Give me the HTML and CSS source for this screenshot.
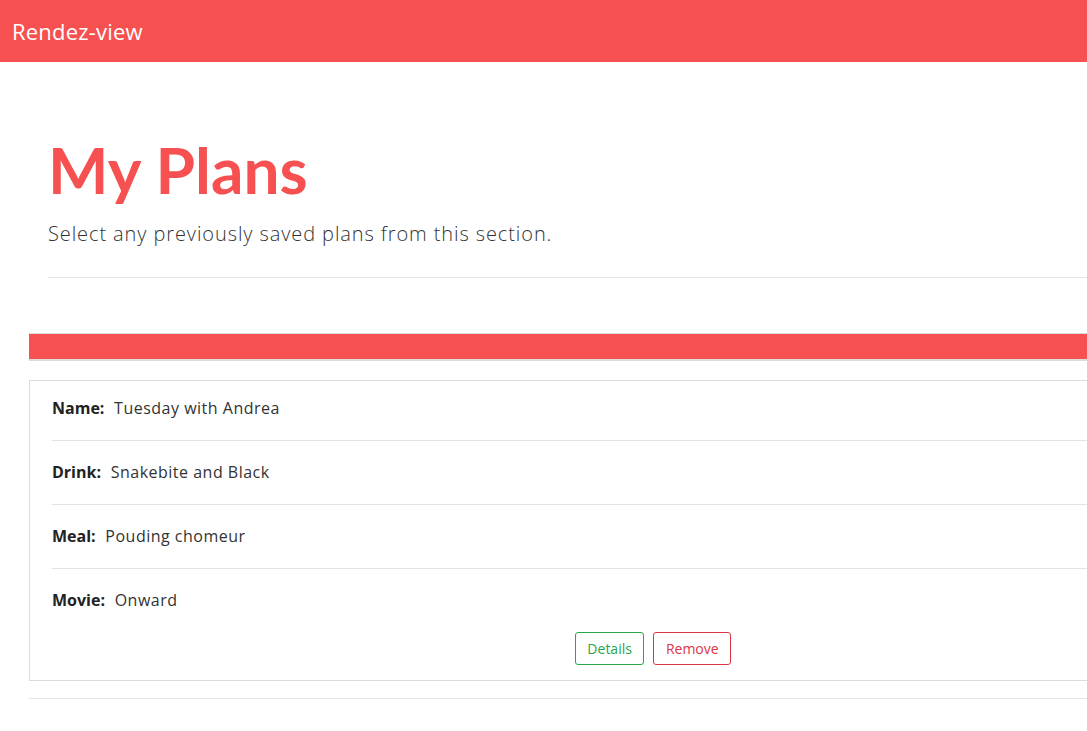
FILE: index.html
```html
<!DOCTYPE html>
<html lang="en">
<head>
<meta charset="utf-8">
<title>Rendez-view</title>
<link rel="stylesheet" href="styles.css">
</head>
<body>
<nav class="navbar"><span class="brand">Rendez-view</span></nav>
<main class="page">
  <section class="jumbo">
    <h1 class="title">My Plans</h1>
    <p class="lead">Select any previously saved plans from this section.</p>
    <hr class="rule">
  </section>
  <div class="bar"></div>
  <div class="card">
    <ul class="fields">
      <li class="field"><b>Name:</b> Tuesday with Andrea</li>
      <li class="field"><b>Drink:</b> Snakebite and Black</li>
      <li class="field"><b>Meal:</b> Pouding chomeur</li>
      <li class="field"><b>Movie:</b> Onward</li>
    </ul>
    <div class="actions">
      <button class="btn btn-details">Details</button>
      <button class="btn btn-remove">Remove</button>
    </div>
  </div>
  <hr class="rule bottom">
</main>
</body>
</html>
```
FILE: styles.css
```css
html, body { overflow: hidden; }
body {
  margin: 0;
  font-family: "Open Sans", "Lato", sans-serif;
  color: #212529;
  background: #fff;
}
.navbar {
  height: 62px;
  background: #f65050;
  display: flex;
  align-items: center;
  padding: 0 12px;
}
.brand {
  color: #fff;
  font-size: 22px;
  letter-spacing: 0.2px;
  line-height: 1;
}
.page {
  width: 1226px;
  margin-left: 29px;
}
.jumbo {
  padding: 70px 19px 0;
}
.title {
  margin: 0;
  color: #f65050;
  font-family: "Lato", "Open Sans", sans-serif;
  font-size: 64px;
  font-weight: 700;
  line-height: 1.2;
}
.lead {
  margin: 10px 0 0;
  font-size: 20px;
  font-weight: 300;
  letter-spacing: 0.9px;
  line-height: 30px;
  color: #333;
}
.rule {
  border: 0;
  border-top: 1px solid #e3e3e3;
  margin: 28px 0 0;
}
.bar {
  margin-top: 55px;
  height: 25px;
  background: #f65050;
  border-top: 1px solid #dcdcdc;
  border-bottom: 2px solid #dcdcdc;
}
.card {
  margin-top: 19px;
  border: 1px solid #dcdcdc;
  padding: 0 0 15px 22px;
}
.fields {
  list-style: none;
  margin: 0;
  padding: 0;
}
.field {
  padding: 19px 0 20px;
  line-height: 24px;
  font-size: 16px;
  letter-spacing: 0.5px;
  color: #333;
  border-bottom: 1px solid #e2e2e2;
}
.field:first-child { padding-top: 15px; }
.field:last-child { border-bottom: 0; }
.field b {
  font-weight: 700;
  letter-spacing: 0;
  color: #222;
  margin-right: 5px;
}
.actions {
  display: flex;
  justify-content: center;
  gap: 9px;
}
.btn {
  height: 33px;
  padding: 0 11.5px;
  background: #fff;
  border: 1px solid;
  border-radius: 3px;
  font-family: inherit;
  font-size: 14px;
}
.btn-details { color: #28a745; border-color: #28a745; }
.btn-remove { color: #dc3545; border-color: #dc3545; }
.bottom { margin-top: 17px; }
```
